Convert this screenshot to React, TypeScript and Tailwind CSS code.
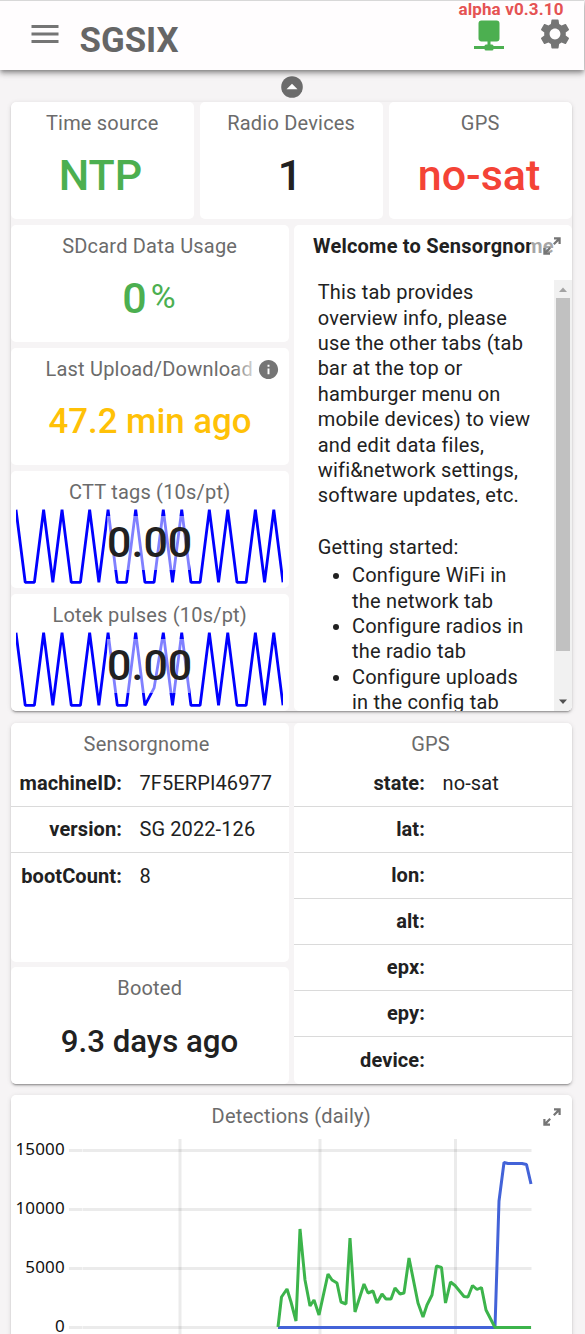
import React from "react";
import { MdMenu, MdSettings, MdInfo } from "react-icons/md";

const CTT = [1, 0, 0, 1, 0, 1, 0, 0, 1, 0, 1, 0, 0, 1, 0, 0, 1, 0, 1, 0, 0, 1, 0, 1, 0, 0, 1, 0, 1, 0];
const LOTEK = CTT.map((v, i) => (i === 15 ? 0.24 : v));

function Card({ title, className = "", children }: { title: string; className?: string; children?: React.ReactNode }) {
  return (
    <section className={`relative flex flex-col overflow-hidden rounded-[5px] bg-white ${className}`}>
      <h2 className="h-[42px] shrink-0 whitespace-nowrap pr-[0.6px] text-center text-[20px] leading-[42px] tracking-[0.2px] text-[#6b6b6b]">{title}</h2>
      {children}
    </section>
  );
}

function Value({ className, children }: { className: string; children: React.ReactNode }) {
  return <div className={`flex h-[63px] items-center justify-center whitespace-nowrap font-medium ${className}`}>{children}</div>;
}

function Expand({ className }: { className: string }) {
  return (
    <svg className={className} width="18" height="18" viewBox="0 0 18 18" fill="none" stroke="#757575" strokeWidth="2.2">
      <path d="M11 1.4H16.6V7M16.6 1.4L10.8 7.2M7 16.6H1.4V11M1.4 16.6L7.2 10.8" />
    </svg>
  );
}

function Spark({ title, data }: { title: string; data: number[] }) {
  const points = data.map((v, i) => `${(i * 267) / 29},${74.3 - v * 72.5}`).join(" ");
  return (
    <Card title={title} className="h-[117px]">
      <div className="relative ml-[5px] mt-[-5px] h-[76px] w-[267px]">
        <svg width="267" height="76" viewBox="0 0 267 76" fill="none">
          <polyline points={points} stroke="#0000ff" strokeWidth="2.8" strokeLinejoin="bevel" />
        </svg>
        <div className="absolute left-[91px] top-[8px] h-[54px] w-[83px] bg-white/50 text-center text-[43px] font-medium leading-[52px] text-[#212121]">0.00</div>
      </div>
    </Card>
  );
}

function Row({ label, value, width, last }: { label: string; value?: string; width: string; last?: boolean }) {
  return (
    <div className={`flex h-[46px] shrink-0 items-center text-[20px] text-[#212121] ${last ? "" : "border-b border-[#dadada] pb-[2px]"}`}>
      <span className={`text-right font-bold tracking-[0.1px] ${width}`}>{label}:</span>
      <span className="pl-[17.5px] tracking-[0.1px]">{value}</span>
    </div>
  );
}

const GREEN = "278,1327 281.5,1297 287,1289 291,1302 296,1321 300,1229 305,1280 310,1306 314,1300 319,1315 328,1274 332,1280 337,1283 341,1302 346,1304 350,1238 355,1312 364,1284 368,1293 373,1291 377,1303 382,1294 386,1299 391,1299 395,1288 400,1294 404,1293 409,1258 418,1303 423,1317 427,1305 432,1295 436.5,1266 441.5,1267.5 445.5,1303 450.5,1282 455,1285.5 464,1296.5 468,1297 472.5,1285.5 477,1289.5 481.5,1287.5 486,1310 495,1327.5 531,1327.5";
const BLUE = "278,1327.5 495,1327.5 499,1201 504,1162.5 508,1163.5 522,1163.5 526.5,1164.5 531,1184";

const SHADOW = "shadow-[0_3px_1px_-2px_rgba(0,0,0,0.2),0_2px_2px_0_rgba(0,0,0,0.14),0_1px_5px_0_rgba(0,0,0,0.12)]";

export default function App() {
  return (
    <div className="h-[1334px] w-[585px] overflow-hidden bg-[#f6f4f5] font-['Roboto',sans-serif] text-[#212121]">
      <header className="relative z-10 flex h-[70px] w-[584px] border-t border-[#d8d8d8] bg-[#fffdfe] shadow-[0_2px_4px_-1px_rgba(0,0,0,0.3),0_4px_5px_0_rgba(0,0,0,0.2),0_1px_10px_0_rgba(0,0,0,0.15)]">
        <MdMenu className="ml-[27px] mt-[15px] size-[36px] text-[#757575]" />
        <h1 className="ml-[16.5px] mt-[15px] text-[34.8px] font-bold leading-[48px] text-[#666]">SGSIX</h1>
        <svg className="ml-auto mt-[15px]" width="36" height="36" viewBox="0 0 24 24" fill="#4caf50">
          <path d="M17,3A2,2 0 0,1 19,5V15A2,2 0 0,1 17,17H13V19H14A1,1 0 0,1 15,20H22V22H15A1,1 0 0,1 14,23H10A1,1 0 0,1 9,22H2V20H9A1,1 0 0,1 10,19H11V17H7C5.89,17 5,16.1 5,15V5A2,2 0 0,1 7,3H17Z" />
        </svg>
        <MdSettings className="ml-[30px] mr-[11px] mt-[15px] size-[36px] text-[#757575]" />
        <span className="absolute right-[20.5px] top-[-2px] text-[17px] font-bold leading-[20px] tracking-[0.12px] text-[#e55353]">alpha v0.3.10</span>
      </header>

      <div className="flex h-[32px] justify-center pr-[2px] pt-[6px]">
        <svg width="22" height="22" viewBox="0 0 22 22">
          <circle cx="11" cy="11" r="10.8" fill="#6c6c6c" />
          <path d="M5.5 13.3L11 7.8L16.5 13.3Z" fill="#fff" />
        </svg>
      </div>

      <main className="ml-[11px] flex w-[561px] flex-col">
        <div className={`flex h-[609px] flex-col gap-[6px] overflow-hidden rounded-[5px] bg-[#f6f4f5] ${SHADOW}`}>
          <div className="grid grid-cols-3 gap-[6px]">
            <Card title="Time source" className="h-[117px]"><Value className="pr-[4px] text-[43px] text-[#4caf50]">NTP</Value></Card>
            <Card title="Radio Devices" className="h-[117px]"><Value className="pr-[3px] text-[43px]">1</Value></Card>
            <Card title="GPS" className="h-[117px]"><Value className="pr-[3px] text-[43px] text-[#f44336]">no-sat</Value></Card>
          </div>
          <div className="grid grid-cols-2 gap-[5px]">
            <div className="flex flex-col gap-[6px]">
              <Card title="SDcard Data Usage" className="h-[117px]">
                <Value className="pr-[2px] text-[43px] text-[#4caf50]">0<span className="ml-[4px] pb-[5px] text-[34px] font-normal">%</span></Value>
              </Card>
              <section className="relative h-[117px] rounded-[5px] bg-white">
                <h2 className="ml-[34.5px] h-[42px] w-[207px] overflow-hidden whitespace-nowrap text-[20px] leading-[42px] tracking-[0.2px] text-[#6b6b6b]">Last Upload/Download</h2>
                <div className="absolute left-[222px] top-[8px] h-[26px] w-[22px] bg-linear-to-r from-white/0 to-white/80" />
                <MdInfo className="absolute left-[246px] top-[10px] size-[23px] text-[#757575]" />
                <Value className="text-[34.8px] text-[#ffc107]">47.2 min ago</Value>
              </section>
              <Spark title="CTT tags (10s/pt)" data={CTT} />
              <Spark title="Lotek pulses (10s/pt)" data={LOTEK} />
            </div>
            <section className="relative flex h-[486px] flex-col overflow-hidden rounded-[5px] bg-white">
              <h2 className="h-[55px] shrink-0 whitespace-nowrap pl-[19px] text-[20px] font-bold leading-[42px] tracking-[0.22px]">Welcome to Sensorgnome</h2>
              <div className="absolute left-[237px] top-[8px] h-[28px] w-[26px] bg-white/60" />
              <Expand className="absolute left-[249px] top-[12px]" />
              <div className="flex h-[431px]">
                <div className="w-[260px] overflow-hidden pl-[23.7px] text-[20px] leading-[25.4px] tracking-[0.2px]">
                  <p className="mt-[0.1px] whitespace-nowrap">This tab provides<br />overview info, please<br />use the other tabs (tab<br />bar at the top or<br />hamburger menu on<br />mobile devices) to view<br />and edit data files,<br />wifi&amp;network settings,<br />software updates, etc.</p>
                  <p className="mt-[26px] whitespace-nowrap">Getting started:</p>
                  <ul className="mt-[3.1px] list-disc whitespace-nowrap pl-[34.3px]">
                    <li>Configure WiFi in<br />the network tab</li>
                    <li>Configure radios in<br />the radio tab</li>
                    <li>Configure uploads<br />in the config tab</li>
                  </ul>
                </div>
                <div className="flex w-[18px] flex-col items-center justify-between bg-[#f1f1f1]">
                  <svg width="18" height="18"><path d="M5 12L9 7.5L13 12Z" fill="#a3a3a3" /></svg>
                  <div className="mb-auto h-[353px] w-[14px] bg-[#c1c1c1]" />
                  <svg width="18" height="18"><path d="M5 6.5H13L9 11Z" fill="#505050" /></svg>
                </div>
              </div>
            </section>
          </div>
        </div>

        <div className={`mt-[12px] grid h-[361px] grid-cols-2 gap-[5px] overflow-hidden rounded-[5px] bg-[#f6f4f5] ${SHADOW}`}>
          <div className="flex flex-col gap-[5px]">
            <section className="h-[239px] rounded-[5px] bg-white">
              <h2 className="h-[38px] pr-[7px] text-center text-[20px] leading-[42px] tracking-[0.2px] text-[#6b6b6b]">Sensorgnome</h2>
              <Row label="machineID" value="7F5ERPI46977" width="w-[111px]" />
              <Row label="version" value="SG 2022-126" width="w-[111px]" />
              <Row label="bootCount" value="8" width="w-[111px]" last />
            </section>
            <Card title="Booted" className="h-[117px]"><Value className="pr-px pt-[4px] text-[31.2px]">9.3 days ago</Value></Card>
          </div>
          <section className="h-[361px] rounded-[5px] bg-white">
            <h2 className="h-[38px] pr-[5px] text-center text-[20px] leading-[42px] tracking-[0.2px] text-[#6b6b6b]">GPS</h2>
            <Row label="state" value="no-sat" width="w-[131px]" />
            <Row label="lat" width="w-[131px]" />
            <Row label="lon" width="w-[131px]" />
            <Row label="alt" width="w-[131px]" />
            <Row label="epx" width="w-[131px]" />
            <Row label="epy" width="w-[131px]" />
            <Row label="device" width="w-[131px]" last />
          </section>
        </div>

        <div className={`mt-[11px] h-[260px] rounded-[5px] ${SHADOW}`}>
          <Card title="Detections (daily)" className="h-[260px]">
            <Expand className="absolute left-[532px] top-[12.5px]" />
            <svg className="mt-[2px]" width="561" height="195" viewBox="11 1139 561 195" fill="none">
              <g stroke="#000" strokeOpacity="0.08" strokeWidth="3">
                {[1150.5, 1209.5, 1268.5, 1327.5].map((y) => <path key={y} d={`M69 ${y}H82.4M82.8 ${y}H531.5`} />)}
                {[180, 320, 455.5].map((x) => <path key={x} d={`M${x} 1139V1334`} />)}
              </g>
              <g fill="#111" fontSize="17" letterSpacing="0.15" textAnchor="end" fontFamily="Noto Sans, sans-serif">
                <text x="64.8" y="1155">15000</text>
                <text x="64.8" y="1214">10000</text>
                <text x="64.8" y="1273">5000</text>
                <text x="64.8" y="1332">0</text>
              </g>
              <polyline points={BLUE} stroke="#4363d8" strokeWidth="3" strokeLinejoin="bevel" />
              <polyline points={GREEN} stroke="#3cb44b" strokeWidth="3" strokeLinejoin="bevel" />
            </svg>
          </Card>
        </div>
      </main>
    </div>
  );
}
